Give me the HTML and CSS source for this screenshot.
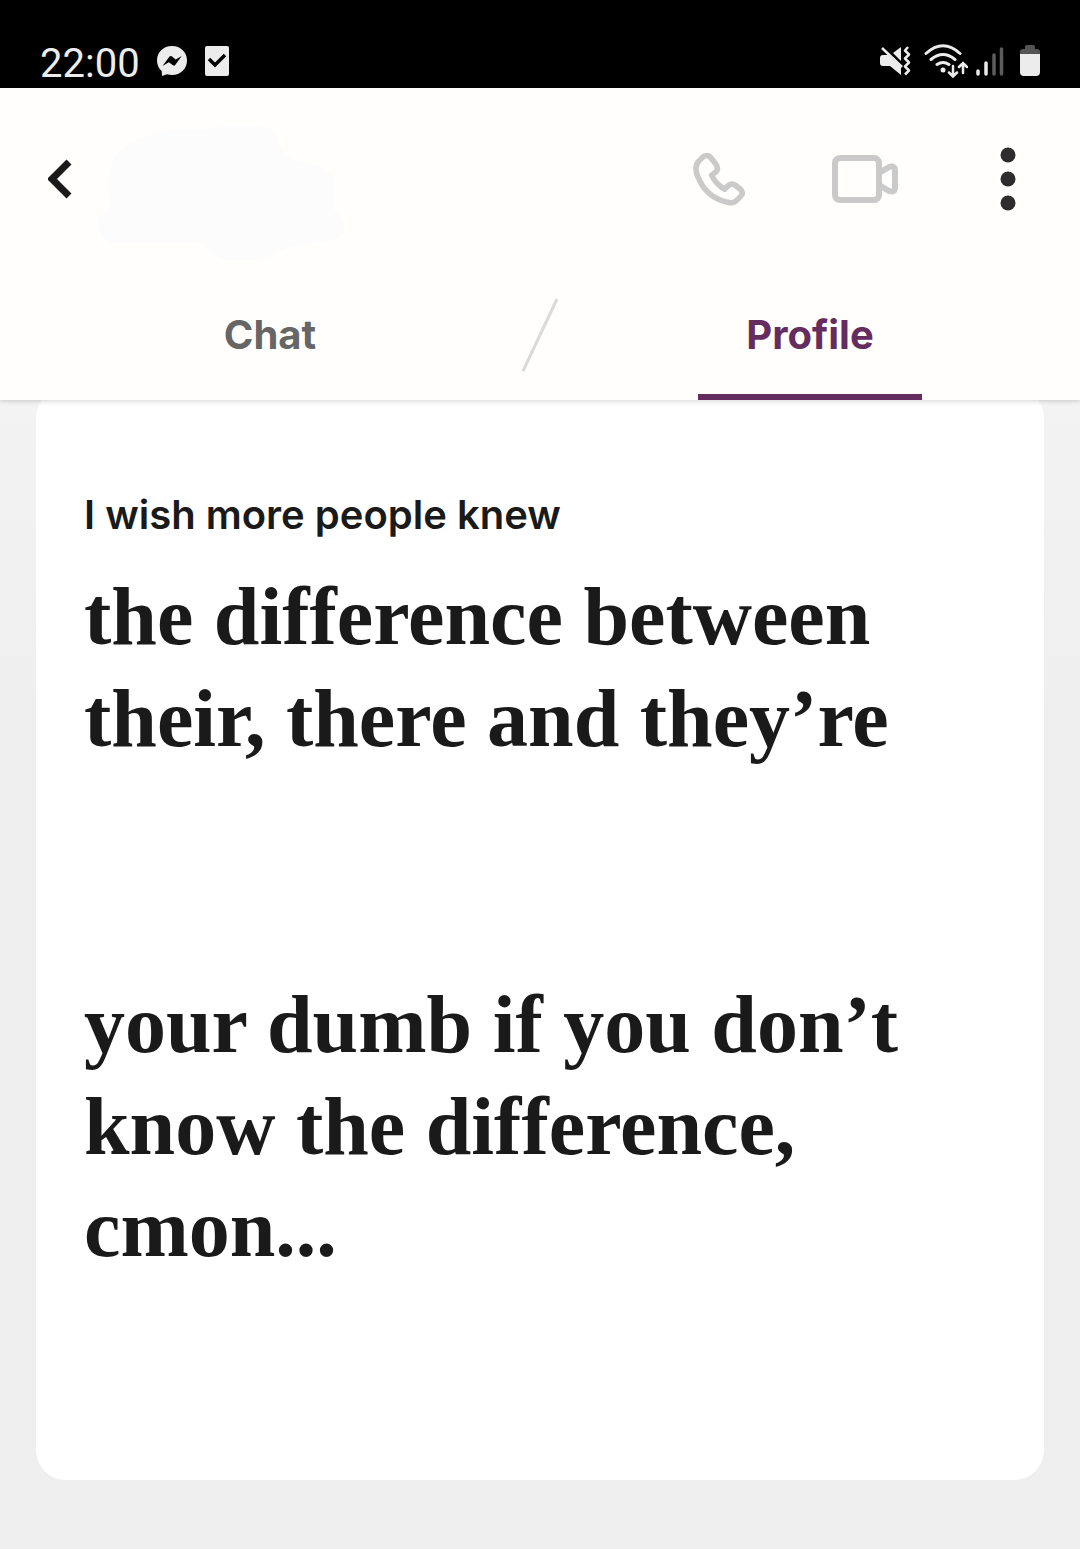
FILE: index.html
```html
<!DOCTYPE html>
<html lang="en">
<head>
<meta charset="utf-8">
<meta name="viewport" content="width=device-width, initial-scale=1">
<title>Profile</title>
<link rel="stylesheet" href="styles.css">
</head>
<body>
<div class="status">
  <div class="status-left">
    <time class="clock">22:00</time>
    <svg width="32" height="32" viewBox="0 0 32 32" aria-hidden="true">
      <path fill="#ececec" d="M16 1C7.300 1 1 7.300 1 15.500c0 4.300 1.800 8 4.700 10.600L6 31l5-1.800c1.600.5 3.300.8 5 .8 8.700 0 15-6.300 15-14.500S24.700 1 16 1z"/>
      <path fill="#000" d="M6.500 21l7-9.500q1-1 2.200-.2l4 3.200 6-3.500-6.500 9q-1 1.200-2.200.3l-4.200-3z"/>
    </svg>
    <svg width="26" height="32" viewBox="0 0 26 32" aria-hidden="true">
      <rect x="1" y="1" width="24" height="30" rx="2" fill="#ececec"/>
      <path fill="none" stroke="#000" stroke-width="3.500" d="M5 14l6 6L21 10"/>
    </svg>
  </div>
  <div class="status-right">
    <svg width="32" height="34" viewBox="0 0 32 34" aria-hidden="true">
      <path fill="#ececec" d="M0 14q0-3 3-3h5l13 12v8l-11-9H3q-3 0-3-3zM13 9l8-6v14z"/>
      <path fill="none" stroke="#ececec" stroke-width="2.500" d="M2 4l20 19"/>
      <path fill="none" stroke="#ececec" stroke-width="2.500" stroke-linejoin="round" d="M28 3l-3 3.500 4 4-4 4 4 4-4 4 4 4-4 4"/>
    </svg>
    <svg width="44" height="34" viewBox="0 0 44 34" aria-hidden="true">
      <g fill="none" stroke="#ececec" stroke-width="3" stroke-linecap="round">
        <path d="M2 9.500Q19-6 36 9.500M7 15.500q12-10 24 0M13 20.500q6-4 12 0"/>
        <path stroke-width="2.500" d="M29 22v10M25 28.500l4 4 4-4M39 29V19M35 23l4-4 4 4"/>
      </g>
      <circle cx="19" cy="26" r="2.500" fill="#ececec"/>
    </svg>
    <svg class="signal" width="28" height="34" viewBox="0 0 28 34" aria-hidden="true">
      <g fill="none" stroke-width="3.500" stroke-linecap="round">
        <path stroke="#ececec" d="M2 27v3M10 19v11"/>
        <path stroke="#5c5c5c" d="M18 11v19M25.500 5v25"/>
      </g>
    </svg>
    <svg class="battery" width="20" height="34" viewBox="0 0 20 34" aria-hidden="true">
      <path fill="#555" d="M0 11V8q0-3 3-3h2V3q0-2 2-2h6q2 0 2 2v2h2q3 0 3 3v3z"/>
      <path fill="#ececec" d="M0 10h20v18q0 4-4 4H4q-4 0-4-4z"/>
    </svg>
  </div>
</div>

<header class="header">
  <div class="toolbar">
    <button class="icon-button" type="button" aria-label="Back">
      <svg width="26" height="40" viewBox="0 0 26 40"><path fill="none" stroke="#1a1a1a" stroke-width="7" d="M21 3L4 20l17 17"/></svg>
    </button>
    <svg class="name" width="248" height="136" viewBox="0 0 248 136" aria-hidden="true">
      <path fill="#fcfcfd" d="M10 56Q14 22 44 14Q60 6 88 5H112Q144-2 172 4Q182 12 182 22Q188 34 202 38Q226 40 236 54V86Q248 94 246 108Q238 118 220 118Q192 120 178 130Q154 140 128 136Q110 130 104 119H12Q0 114 0 98Q2 90 12 84Z"/>
    </svg>
    <button class="icon-button call" type="button" aria-label="Voice call">
      <svg width="52" height="54" viewBox="0 0 56 58"><path fill="none" stroke="#cacaca" stroke-width="6" stroke-linejoin="round" d="M14 4Q17 3 19 6l5 6q4 5 1 9l-5 4q5 10 14 15l4-4q4-3 8 0l5 4q4 4 0 8l-4 4q-4 4-10 2Q14 49 5 26Q1 16 6 10l5-5Q12 4 14 4z"/></svg>
    </button>
    <button class="icon-button video" type="button" aria-label="Video call">
      <svg width="68" height="50" viewBox="0 0 68 50"><g fill="none" stroke="#cacaca" stroke-width="6" stroke-linejoin="round"><rect x="4" y="4" width="44" height="42" rx="5"/><path d="M48 19l10-6q6-2 6 4v16q0 6-6 4l-10-6"/></g></svg>
    </button>
    <button class="icon-button" type="button" aria-label="More options">
      <svg width="16" height="64" viewBox="0 0 16 64"><g fill="#2d2d2d"><circle cx="8" cy="8" r="7.500"/><circle cx="8" cy="32" r="7.500"/><circle cx="8" cy="56" r="7.500"/></g></svg>
    </button>
  </div>
  <nav class="tabs">
    <a class="tab" href="#chat">Chat</a>
    <svg class="slash" width="36" height="74" viewBox="0 0 36 74" aria-hidden="true"><path stroke="#dadada" stroke-width="3" d="M1 73L35 1"/></svg>
    <a class="tab active" href="#profile" aria-current="page">Profile</a>
  </nav>
</header>

<main class="content">
  <article class="card">
    <h2 class="prompt">I wish more people knew</h2>
    <p class="answer">the difference between their, there and they’re


your dumb if you don’t know the difference, cmon...</p>
  </article>
</main>
</body>
</html>
```
FILE: styles.css
```css
* {
  box-sizing: border-box;
}

body {
  margin: 0;
  min-height: 100vh;
  background: linear-gradient(#f3f3f3 400px, #efefef 700px);
  color: #1a1a1a;
  font-family: Inter, "Liberation Sans", sans-serif;
}

svg {
  display: block;
}

.status {
  display: flex;
  justify-content: space-between;
  height: 88px;
  padding: 36px 40px 0;
  background: #000;
  color: #ececec;
}

.status-left,
.status-right {
  display: flex;
  align-items: center;
  height: 50px;
}

.status-left {
  gap: 16px;
}

.status-right {
  gap: 12px;
}

.signal {
  margin-left: -4px;
}

.battery {
  margin-left: 4px;
}

.clock {
  padding-top: 5px;
  font: 40px/50px Roboto, sans-serif;
}

.header {
  position: relative;
  z-index: 1;
  background: #fffefd;
  box-shadow: 0 1px 5px rgba(0, 0, 0, 0.18);
}

.toolbar {
  display: flex;
  align-items: center;
  height: 182px;
  padding: 0 64px 0 48px;
}

.icon-button {
  padding: 0;
  border: 0;
  background: none;
}

.name {
  margin: 36px 0 10px 24px;
}

.call {
  margin-left: auto;
}

.video {
  margin: 0 101px 0 86px;
}

.tabs {
  display: flex;
  align-items: center;
  height: 130px;
}

.slash {
  margin: 0 -18px;
}

.tab {
  display: flex;
  flex: 1 1 0;
  align-items: center;
  justify-content: center;
  height: 100%;
  color: #666;
  font-size: 40px;
  font-weight: 700;
  line-height: 50px;
  text-decoration: none;
}

.active {
  background: linear-gradient(#652c60, #652c60) center bottom / 224px 6px no-repeat;
  color: #652c60;
}

.content {
  padding: 0 36px 69px;
}

.card {
  margin-top: -12px;
  padding: 102px 48px 200px;
  border-radius: 30px;
  background: #fff;
}

.prompt {
  margin: 0 0 26px;
  font-size: 40px;
  font-weight: 600;
  line-height: 50px;
}

.answer {
  margin: 0;
  font-family: "Liberation Serif", serif;
  font-size: 82px;
  font-weight: 700;
  line-height: 102px;
  white-space: pre-line;
}
```
